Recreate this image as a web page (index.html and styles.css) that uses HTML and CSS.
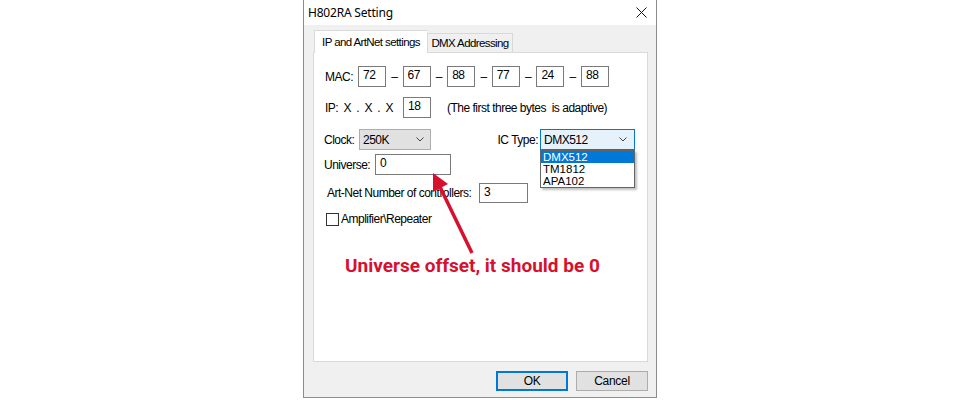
FILE: index.html
```html
<!DOCTYPE html>
<html lang="en">
<head>
    <meta charset="UTF-8">
    <meta name="viewport" content="width=device-width, initial-scale=1.0">
    <title>H802RA Setting</title>
    <link rel="stylesheet" href="styles.css">
</head>
<body>
    <div class="window">
        <div class="titlebar">
            <span class="title">H802RA Setting</span>
            <svg class="close" width="11" height="11" viewBox="0 0 11 11">
                <path d="M0.5 0.5 L10.5 10.5 M10.5 0.5 L0.5 10.5" stroke="#111" stroke-width="1" fill="none"/>
            </svg>
        </div>

        <div class="dialog-body">
            <div class="tabs">
                <div class="tab active">IP and ArtNet settings</div>
                <div class="tab">DMX Addressing</div>
            </div>

            <div class="panel">
                <div class="row row-mac">
                    <span class="label mac-label">MAC:</span>
                    <span class="field mac-field">72</span><span class="dash">–</span>
                    <span class="field mac-field">67</span><span class="dash">–</span>
                    <span class="field mac-field">88</span><span class="dash">–</span>
                    <span class="field mac-field">77</span><span class="dash">–</span>
                    <span class="field mac-field">24</span><span class="dash">–</span>
                    <span class="field mac-field">88</span>
                </div>

                <div class="row row-ip">
                    <span class="label ip-label">IP: X . X . X</span>
                    <span class="field ip-field">18</span>
                    <span class="note">(The first three bytes&nbsp; is adaptive)</span>
                </div>

                <div class="row row-clock">
                    <span class="label clock-label">Clock:</span>
                    <div class="combo clock-combo">
                        <span>250K</span>
                        <svg class="chevron" width="8" height="5" viewBox="0 0 8 5"><path d="M0.5 0.5 L4 4 L7.5 0.5" stroke="#444" fill="none"/></svg>
                    </div>
                    <div class="ic-group">
                        <span class="label">IC Type:</span>
                        <div class="combo ic-combo">
                            <span>DMX512</span>
                            <svg class="chevron" width="8" height="5" viewBox="0 0 8 5"><path d="M0.5 0.5 L4 4 L7.5 0.5" stroke="#444" fill="none"/></svg>
                            <ul class="dropdown">
                                <li class="selected">DMX512</li>
                                <li>TM1812</li>
                                <li>APA102</li>
                            </ul>
                        </div>
                    </div>
                </div>

                <div class="row row-universe">
                    <span class="label universe-label">Universe:</span>
                    <span class="field universe-field">0</span>
                </div>

                <div class="row row-artnet">
                    <span class="label artnet-label">Art-Net Number of controllers:</span>
                    <span class="field artnet-field">3</span>
                </div>

                <div class="row row-check">
                    <span class="checkbox"></span>
                    <span class="label">Amplifier\Repeater</span>
                </div>

                <!-- callout drawn over the form -->
                <svg class="callout-arrow" width="334" height="308" viewBox="0 0 334 308">
                    <line x1="158" y1="200" x2="126" y2="134" stroke="#d6102e" stroke-width="3.5"/>
                    <polygon points="119,120 134,131 119,139" fill="#d6102e"/>
                </svg>
                <div class="callout-text">Universe offset, it should be 0</div>
            </div>

            <div class="buttons">
                <button class="btn btn-default">OK</button>
                <button class="btn">Cancel</button>
            </div>
        </div>
    </div>
</body>
</html>
```

FILE: styles.css
```css
body {
    margin: 0;
    background-color: #ffffff;
    font-family: "Liberation Sans", Arial, sans-serif;
    font-size: 12px;
    letter-spacing: -0.5px;
    color: #000;
}

.window {
    width: 354px;
    height: 398px;
    margin: 0 auto;
    box-sizing: border-box;
    border: 1px solid #8c8c8c;
    border-top: none;
    background-color: #f0f0f0;
}

.titlebar {
    height: 25px;
    background-color: #ffffff;
    display: flex;
    align-items: center;
    justify-content: space-between;
    padding: 0 9px 0 4px;
}

.title {
    font-family: "Noto Sans", "Open Sans", sans-serif;
    font-size: 12px;
    letter-spacing: -0.2px;
}

.dialog-body {
    padding: 5px 8px 0 9px;
}

.tabs {
    display: flex;
    align-items: flex-end;
    height: 22px;
    padding-left: 1px;
}

.tab {
    box-sizing: border-box;
    height: 19px;
    width: 86px;
    border: 1px solid #d9d9d9;
    border-bottom: none;
    background-color: #f0f0f0;
    text-align: center;
    font-size: 11.5px;
    letter-spacing: -0.6px;
    line-height: 18px;
    white-space: nowrap;
}

.tab.active {
    position: relative;
    z-index: 1;
    width: 113px;
    height: 23px;
    margin-bottom: -1px;
    background-color: #ffffff;
    line-height: 22px;
    border-right: none;
}

.panel {
    position: relative;
    box-sizing: border-box;
    height: 310px;
    border: 1px solid #d9d9d9;
    background-color: #ffffff;
    padding: 13px 12px 0 10px;
}

.row {
    display: flex;
    align-items: center;
}

.label {
    white-space: nowrap;
}

.field {
    box-sizing: border-box;
    height: 21px;
    border: 1px solid #7a7a7a;
    padding: 0 4px;
    line-height: 17px;
    background-color: #fff;
}

.mac-label {
    width: 34px;
    padding-left: 1px;
    box-sizing: border-box;
}

.mac-field {
    width: 28px;
}

.dash {
    width: 16.6px;
    text-align: center;
}

.row-ip {
    margin-top: 10px;
}

.ip-label {
    width: 79px;
    padding-left: 1px;
    box-sizing: border-box;
    word-spacing: 2.5px;
}

.ip-field {
    width: 28px;
}

.note {
    margin-left: 16px;
}

.row-clock {
    margin-top: 11px;
}

.clock-label {
    width: 35px;
}

.combo {
    position: relative;
    box-sizing: border-box;
    height: 21px;
    display: flex;
    align-items: center;
    justify-content: space-between;
    padding: 0 6px 0 3px;
    border: 1px solid #adadad;
    background-color: #e1e1e1;
}

.clock-combo {
    width: 72px;
}

.ic-group {
    display: flex;
    align-items: center;
    margin-left: auto;
    gap: 2px;
}

.ic-combo {
    width: 95px;
    padding-right: 7px;
    border-color: #0078d7;
    background-color: #e5f1fb;
}

.dropdown {
    position: absolute;
    top: 20px;
    left: -1px;
    z-index: 2;
    width: 95px;
    box-sizing: border-box;
    margin: 0;
    padding: 0;
    list-style: none;
    border: 1px solid #646464;
    background-color: #fff;
    box-shadow: 2px 2px 2px rgba(0, 0, 0, 0.25);
    letter-spacing: 0;
    font-size: 11.5px;
}

.dropdown li {
    height: 12px;
    line-height: 12px;
    padding-left: 2px;
}

.dropdown li.selected {
    background-color: #0078d7;
    color: #fff;
}

.row-universe {
    margin-top: 4px;
}

.universe-label {
    width: 51px;
}

.universe-field {
    width: 76px;
}

.row-artnet {
    margin-top: 8px;
    padding-left: 3px;
}

.artnet-label {
    width: 152px;
}

.artnet-field {
    width: 49px;
    height: 20px;
}

.row-check {
    margin-top: 9px;
    padding-left: 2px;
}

.checkbox {
    width: 13px;
    height: 13px;
    box-sizing: border-box;
    border: 1px solid #333;
    margin-right: 2px;
}

.callout-arrow {
    position: absolute;
    left: 0;
    top: 0;
}

.callout-text {
    position: absolute;
    left: 31px;
    top: 203px;
    font-family: Roboto, "Liberation Sans", sans-serif;
    font-weight: bold;
    font-size: 19px;
    line-height: 19px;
    letter-spacing: 0;
    color: #d6102e;
    white-space: nowrap;
}

.buttons {
    display: flex;
    justify-content: flex-end;
    gap: 8px;
    margin-top: 9px;
}

.btn {
    box-sizing: border-box;
    width: 72px;
    height: 20px;
    padding: 0;
    border: 1px solid #adadad;
    background-color: #e1e1e1;
    font-family: "Liberation Sans", Arial, sans-serif;
    font-size: 12px;
    letter-spacing: -0.3px;
    color: #000;
}

.btn-default {
    border: 2px solid #0078d7;
}
```
